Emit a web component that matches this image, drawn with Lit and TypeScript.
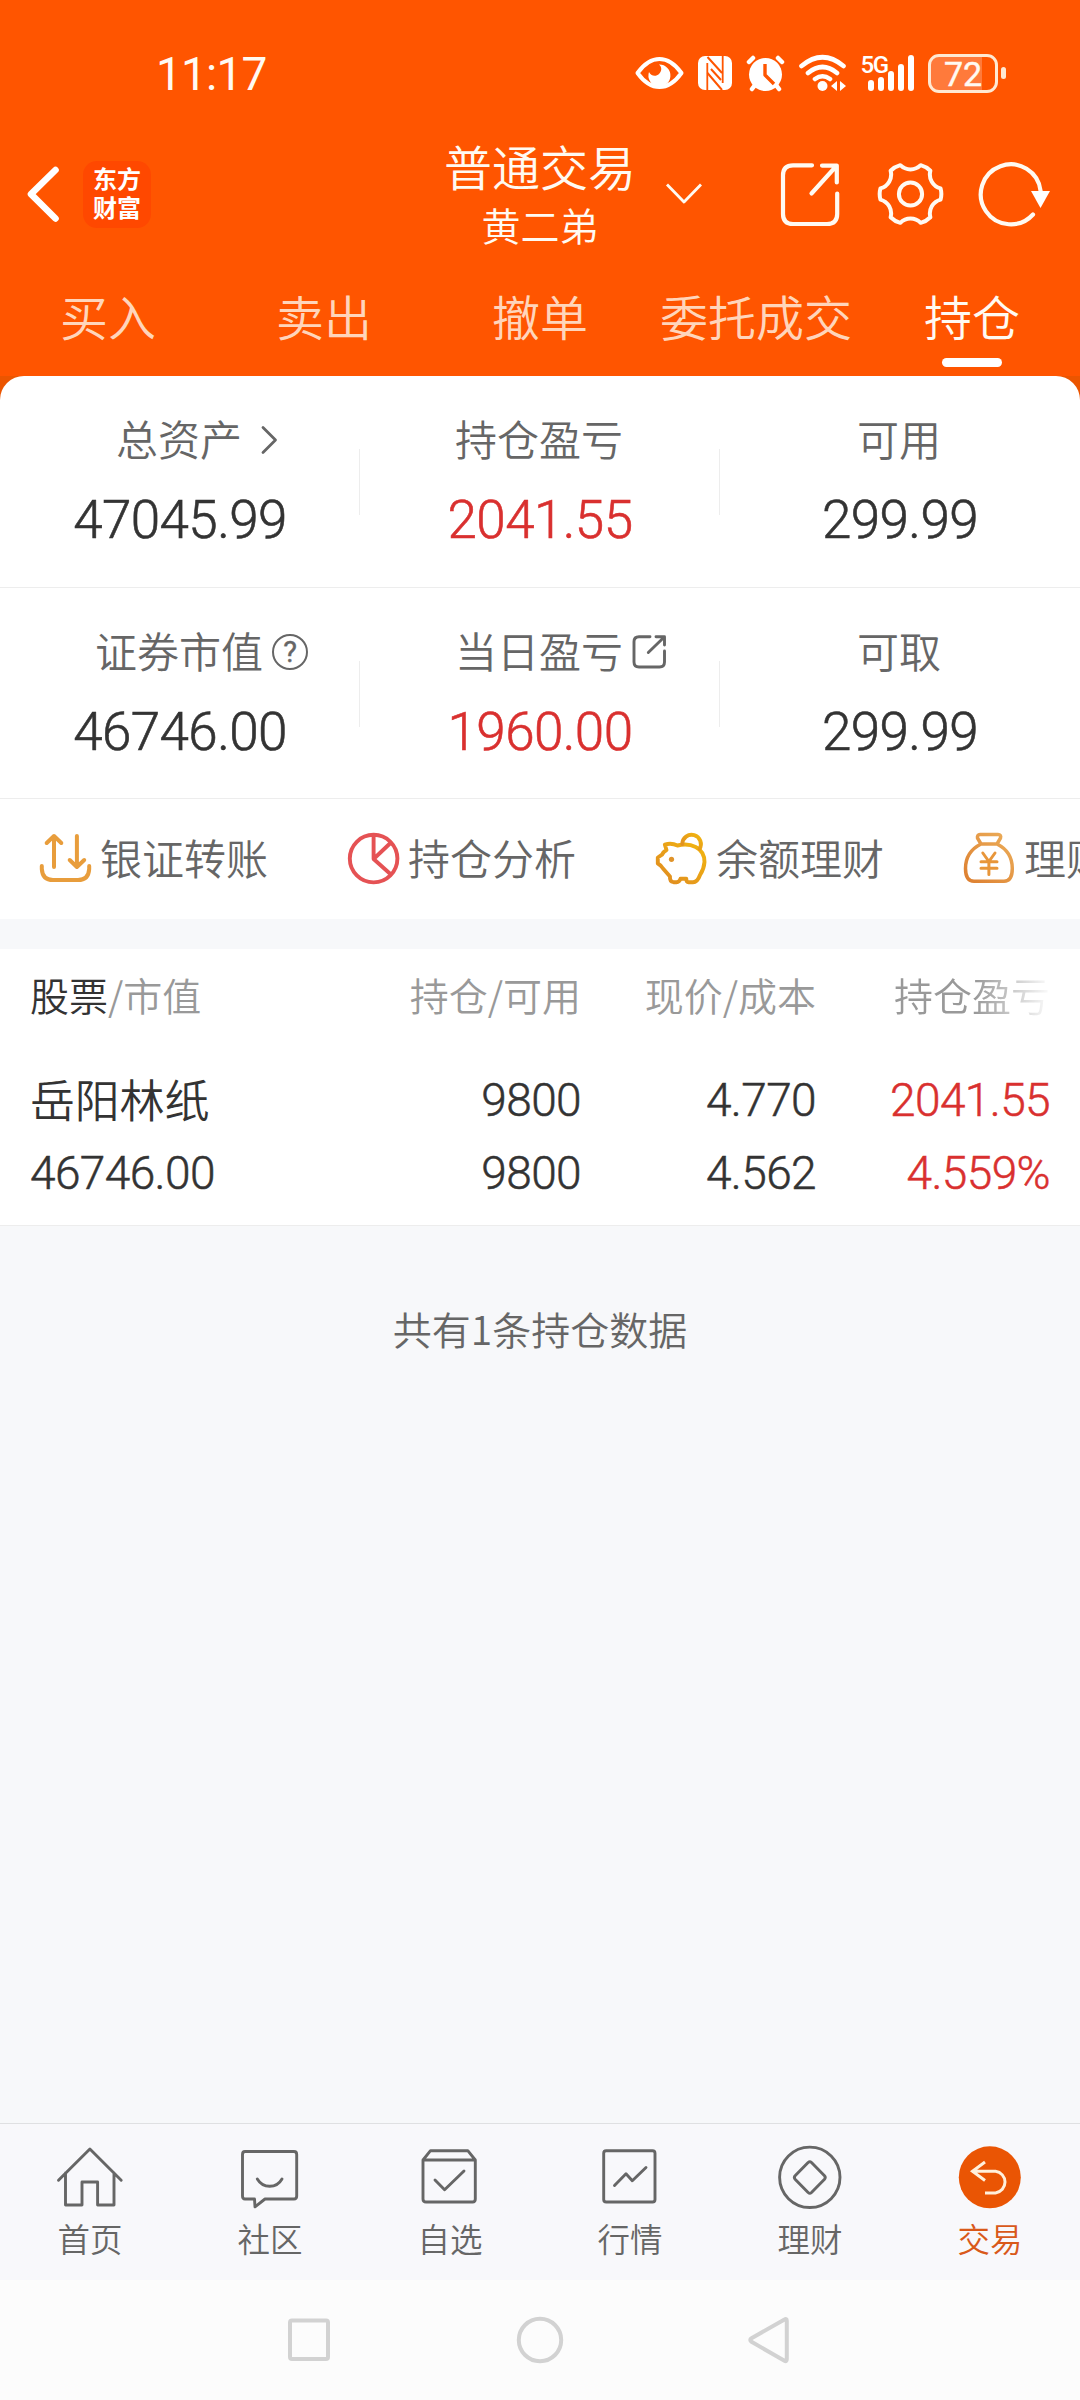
import { LitElement, html, svg, css, nothing } from "lit";
import type { TemplateResult, SVGTemplateResult } from "lit";
import { customElement } from "lit/decorators.js";
import { classMap } from "lit/directives/class-map.js";

interface Metric {
  label: string;
  value: string;
  up?: boolean;
  icon?: TemplateResult;
}

interface IconItem {
  label: string;
  icon: TemplateResult;
  active?: boolean;
}

/* Every icon keeps its drawing in one shared page space; the view box picks its region. */
const icon = (
  x: number,
  y: number,
  w: number,
  h: number,
  color: string,
  stroke: number,
  body: SVGTemplateResult,
) => html`<svg
  width=${w}
  height=${h}
  viewBox="${x} ${y} ${w} ${h}"
  fill="none"
  stroke=${color}
  stroke-width=${stroke}
  stroke-linecap="round"
  stroke-linejoin="round"
>${body}</svg>`;

const gearPath = (cx: number, cy: number): string => {
  const at = (deg: number, r: number) => {
    const a = (deg * Math.PI) / 180;
    return `${(cx + r * Math.cos(a)).toFixed(2)} ${(cy + r * Math.sin(a)).toFixed(2)}`;
  };
  let d = `M${at(-10.5, 30.6)}`;
  for (let k = 0; k < 6; k++) {
    const t = k * 60;
    d += `Q${at(t, 31.6)} ${at(t + 10.5, 30.6)}`;
    d += `C${at(t + 19, 23.6)} ${at(t + 41, 23.6)} ${at(t + 49.5, 30.6)}`;
  }
  return d + "Z";
};

const GREY = "#666666";
const WHITE = "#fffaf2";

const eye = icon(635, 55, 49, 36, "#fff", 4, svg`
  <path d="M637.5 73C644 64 652 59 659.500 59S675 64 681.500 73C675 82 667 87 659.500 87S644 82 637.500 73Z"/>
  <path stroke="none" fill="#fff" d="M659 64.500A11 11 0 1 1 649 72C650.500 76 656 77 659 74C662 71 662 67 659 64.500Z"/>`);
const nfc = icon(698, 56, 34, 34, "#fff", 0, svg`
  <rect x="698" y="56" width="34" height="34" rx="7" fill="#fff"/>
  <path d="M707.300 63V90M722.700 56V83" stroke="#ff5500" stroke-width="1.800" stroke-linecap="butt"/>
  <path d="M707.500 57L722 73M711 69L721 80M707.500 73L722 90" stroke="#ff5500" stroke-width="2" stroke-linecap="butt"/>`);
const alarm = icon(746, 54, 39, 38, "#fff", 4.5, svg`
  <circle cx="765.500" cy="74.500" r="16.500" fill="#fff" stroke="none"/>
  <path d="M749 62L753 58M782 62L778 58M755 85L752 89M776 85L779 89"/>
  <path stroke="#ff5500" stroke-width="3.400" stroke-linecap="butt" d="M765 64V75L774 84"/>`);
const wifi = icon(799, 54, 48, 38, "#fff", 4.6, svg`
  <path d="M801.500 66Q822.500 48.500 843.500 66M808 73Q822.500 61 837 73M815 79Q822.500 73.500 830 79"/>
  <circle cx="822.500" cy="86" r="5" fill="#fff" stroke="none"/>
  <path stroke="none" fill="#fff" d="M837 81V91L831 86zM840 81V91L846 86z"/>`);
const signal = icon(860, 44, 54, 58, "#fff", 6, svg`
  <path d="M871 83V88M881 80V88M891 74V88M901 67V88M911 58V88"/>
  <text class="net" x="860.500" y="73" stroke="none" fill="#fff">5G</text>`);

const backIcon = icon(24, 162, 38, 64, "#fff", 6.6, svg`<path d="M55.500 170L31 194.200L55.500 218.500"/>`);
const downIcon = icon(664, 180, 40, 26, WHITE, 2.8, svg`<path stroke-linecap="butt" d="M667 183.500L684 201L701 183.500"/>`);
const shareIcon = icon(780, 161, 62, 67, WHITE, 4.2, svg`
  <path d="M812 165.300H793Q783 165.300 783 175.300V214Q783 224 793 224H827Q837.200 224 837.200 214V193.500"/>
  <path d="M822 165.600H836.800V182.500M811.500 193.500L835 167.500"/>`);
const gearIcon = icon(876, 160, 68, 68, WHITE, 4, svg`
  <path d=${gearPath(910.5, 194)}/><circle cx="910.500" cy="194" r="11.600"/>`);
const refreshIcon = icon(978, 160, 74, 68, WHITE, 4.2, svg`
  <path d="M1033 214.500A30 30 0 1 1 1040.600 191"/>
  <path d="M1031 191H1050L1040.500 208Z" fill="#fff" stroke="none"/>`);

const chevronRight = icon(260, 423, 20, 34, GREY, 2.8, svg`<path d="M263 427.500L275.500 440L263 452.500"/>`);
const openSmall = icon(633, 633, 36, 36, GREY, 2.9, svg`
  <path d="M651 635.700H640Q635 635.700 635 640.700V661Q635 666 640 666H660.500Q665.500 666 665.500 661V650"/>
  <path d="M657 635.700H665.500V644M649.300 651.500L664.500 636.700"/>`);

const transferIcon = icon(38, 831, 54, 54, "#e89d3c", 4, svg`
  <path d="M54 867V836M46.700 843L54 836L61.300 843M76.900 836V866M69.700 860L76.900 867L84.200 860M41.800 866V869Q42.500 880 53 880H78Q88.500 880 89.200 869V866"/>`);
const pieIcon = icon(346, 831, 54, 54, "#e55254", 3.9, svg`
  <circle cx="373.600" cy="858.600" r="23.800"/>
  <path stroke-linecap="butt" d="M373.600 835V859L391 842.500M373.600 859L391.500 875"/>`);
const pigIcon = icon(654, 831, 54, 54, "url(#pig)", 3.9, svg`
  <defs><linearGradient id="pig" x1="0" y1="1" x2="1" y2="0"><stop offset="0" stop-color="#df8a22"/><stop offset="1" stop-color="#f2b60f"/></linearGradient></defs>
  <path d="M664.800 844.500Q671.500 842.500 677.500 845.500C690 842.500 704.500 847 704.500 862Q704 869 700 875Q697.500 882.200 693 882.200H688.500Q686.300 882.200 686.300 878.800H680.500Q679.500 882.200 676.500 882.200H673.500Q669.500 881.500 670 876.500L663 868.500Q661.500 865.500 657.800 863.500V857.500L662 854.700Q663 852 666.500 850Z"/>
  <path d="M682.300 844A9.300 9.300 0 1 1 699.500 849"/>
  <circle cx="671.500" cy="859.300" r="2.600" fill="#e0932a" stroke="none"/>`);
const bagIcon = icon(962, 831, 54, 54, "url(#bag)", 3.5, svg`
  <defs><linearGradient id="bag" x1="0" y1="1" x2="1" y2="0"><stop offset="0" stop-color="#dd7f30"/><stop offset="1" stop-color="#ecae5a"/></linearGradient></defs>
  <path d="M981 844L977.500 838Q977 834.600 980 834.600H998Q1001.500 834.600 1000.500 838L997 844ZM981 844C971 849 965.500 858 965.500 868.500Q965.500 881.200 974 881.200H1004Q1012.300 881.200 1012.300 868.500C1012.300 858 1007 849 997 844"/>
  <path stroke="#e8963a" stroke-width="3" d="M982.800 853L988.900 861.500L995 853M988.900 861.500V874.500M981 861.700H997M981 868.300H997"/>`);

const homeIcon = icon(56, 2143, 68, 68, GREY, 2.9, svg`
  <path d="M58.500 2180.200L89.900 2149L121.200 2180.200M65.500 2173V2205H82V2182H97.600V2205H114V2173"/>`);
const chatIcon = icon(236, 2143, 68, 68, GREY, 2.9, svg`
  <path d="M245 2151.500H294Q296.700 2151.500 296.700 2154.500V2196Q296.700 2199 294 2199H265L255 2206.800L254.500 2199H245Q242.500 2199 242.500 2196V2154.500Q242.500 2151.500 245 2151.500Z"/>
  <path d="M257.300 2179C263 2188.700 276.500 2188.700 282 2179"/>`);
const pickIcon = icon(416, 2143, 68, 68, GREY, 2.9, svg`
  <path d="M423 2160H475.300V2199Q475.300 2202 472.500 2202H426Q423 2202 423 2199ZM423 2160L430.500 2150.700H467.800L475.300 2160M435 2180L444.600 2189.700L464 2171"/>`);
const marketIcon = icon(596, 2143, 68, 68, GREY, 2.9, svg`
  <rect x="603.700" y="2150.700" width="51.300" height="51.300" rx="2.500"/>
  <path d="M614.500 2185.500L626 2173.700L632.300 2180.700L646 2167.500"/>`);
const wealthIcon = icon(776, 2143, 68, 68, GREY, 2.9, svg`
  <circle cx="809.800" cy="2177.300" r="30.200"/>
  <path d="M811.500 2162.500L824.500 2175.800Q826 2177.500 824.500 2179.200L811.500 2192.500Q809.800 2194 808.100 2192.500L795.100 2179.200Q793.600 2177.500 795.100 2175.800L808.100 2162.500Q809.800 2161 811.500 2162.500Z"/>`);
const tradeIcon = icon(956, 2143, 68, 68, "#fff0dc", 3, svg`
  <circle cx="989.800" cy="2177.300" r="31" fill="#ea5504" stroke="none"/>
  <path stroke-linecap="butt" stroke-linejoin="miter" d="M985 2162L972.500 2171.200L985 2180.500M972.500 2171.200H995.500A11 11 0 0 1 995.500 2193H985"/>`);

const sysSquare = icon(282, 2312, 54, 56, "#d2d2d2", 4, svg`<rect x="290" y="2320.500" width="38" height="38.500" rx="2"/>`);
const sysCircle = icon(512, 2312, 54, 56, "#d2d2d2", 4, svg`<circle cx="540" cy="2340" r="21.200"/>`);
const sysBack = icon(742, 2312, 54, 56, "#d2d2d2", 4, svg`<path d="M784.500 2319.500Q786.800 2318 786.800 2321V2359Q786.800 2362 784.500 2360.800L751.500 2341.800Q749 2340 751.500 2338.200Z"/>`);

@customElement("app-root")
export class AppRoot extends LitElement {
  static styles = css`
    :host {
      display: flex;
      flex-direction: column;
      width: 1080px;
      height: 2400px;
      overflow: hidden;
      background: #f7f8fa;
      color: #333;
      font-family: "Noto Sans CJK SC", sans-serif;
      font-weight: 350;
      white-space: nowrap;
    }
    svg { display: block; flex: none; }
    .num { font-family: Roboto, "Noto Sans CJK SC", sans-serif; font-weight: 350; }
    .head { background: #ff5500; color: #fffaf2; flex: none; }
    .status {
      height: 146px;
      box-sizing: border-box;
      padding: 0 74px 0 156px;
      display: flex;
      align-items: center;
      gap: 14px;
    }
    .time { font-size: 46px; line-height: 50px; letter-spacing: -0.8px; margin-right: auto; padding-top: 1px; font-weight: 400; }
    .signal svg { margin-left: -1px; }
    .net { font: 500 24px Roboto, sans-serif; letter-spacing: -1.5px; }
    .battery { display: flex; align-items: center; gap: 3px; }
    .cell {
      width: 70px;
      height: 39px;
      box-sizing: border-box;
      border: 3px solid #ffe9d2;
      border-radius: 11px;
      background: linear-gradient(90deg, #ff7a3b 51px, transparent 51px);
      font-size: 34px;
      line-height: 35px;
      font-weight: 400;
      -webkit-text-stroke: 0.4px currentColor;
      text-align: center;
    }
    .nub { width: 5px; height: 12px; border-radius: 2.5px; background: #ffe9d2; }
    .bar { height: 96px; display: grid; grid-template: 96px / 1fr auto 1fr; align-items: center; }
    .left { display: flex; align-items: center; padding-left: 24px; gap: 21px; }
    .logo {
      width: 68px;
      height: 67px;
      border-radius: 14px;
      background: #ff4800;
      color: #fff;
      font-size: 24px;
      font-weight: 700;
      line-height: 29px;
      text-align: center;
      padding-top: 2px;
      box-sizing: border-box;
    }
    .title { text-align: center; }
    .name { font-size: 48px; line-height: 60px; }
    .sub { font-size: 39px; line-height: 58px; }
    .right { display: flex; align-items: center; padding: 0 28px; }
    .tools { display: flex; align-items: center; gap: 34px; margin-left: auto; }
    .tabs { height: 134px; display: grid; grid-template-columns: repeat(5, 1fr); }
    .tab {
      display: flex;
      flex-direction: column;
      align-items: center;
      padding-top: 43px;
      gap: 13px;
      font-size: 48px;
      line-height: 60px;
      color: #ffd5bb;
    }
    .tab.on { color: #fffaf2; }
    .mark { width: 60px; height: 9px; border-radius: 4.500px; background: #fff; }
    .backing { background: #eb5500; flex: none; }
    .panel { background: #fff; border-radius: 24px 24px 0 0; }
    .metrics { display: grid; grid-template-columns: repeat(3, 1fr); height: 211px; border-bottom: 1px solid #ededed; }
    .metrics + .metrics { height: 210px; }
    .metric { display: flex; flex-direction: column; background: linear-gradient(#ededed, #ededed) right 73px / 1px 66px no-repeat; }
    .metric.last { background: none; }
    .label {
      display: grid;
      grid-template-columns: 1fr auto 1fr;
      align-items: center;
      height: 60px;
      padding-top: 34px;
      font-size: 42px;
      line-height: 60px;
      color: #666;
    }
    .label .hang { grid-column: 3; padding-left: 8px; }
    .label .text { grid-column: 2; margin: -4px 1px 0 -1px; }
    .hang.wide { padding-left: 17px; }
    .help {
      width: 36px;
      height: 36px;
      box-sizing: border-box;
      border: 2.700px solid #666;
      border-radius: 50%;
      font: 400 29px/32px Roboto, sans-serif;
      -webkit-text-stroke: 0.4px currentColor;
      text-align: center;
    }
    .value {
      font-size: 53px;
      line-height: 60px;
      letter-spacing: -0.6px;
      text-align: center;
      padding-top: 20px;
      -webkit-text-stroke: 0.6px currentColor;
    }
    .up { color: #d9302f; }
    .quick { display: flex; gap: 78px; align-items: center; height: 120px; padding-left: 38px; overflow: hidden; }
    .item { display: flex; flex: none; align-items: center; gap: 8px; font-size: 42px; line-height: 60px; color: #666; }
    .item svg { margin-top: -2px; }
    .item span { margin-top: -5px; }
    .table { margin-top: 30px; background: #fff; height: 276px; border-bottom: 1px solid #ededed; flex: none; }
    .row { display: grid; grid-template-columns: 341px 210px 235px 234px; padding: 0 30px; text-align: right; }
    .row > :first-child { text-align: left; }
    .th { font-size: 39px; line-height: 60px; color: #999; padding-top: 15px; height: 98px; box-sizing: border-box; }
    .dark { color: #333; }
    .fade { -webkit-mask-image: linear-gradient(90deg, #000 68%, transparent 101%); mask-image: linear-gradient(90deg, #000 68%, transparent 101%); }
    .td {
      font-size: 46px;
      line-height: 73px;
      letter-spacing: -0.6px;
      height: 73px;
      padding-top: 17px;
      box-sizing: content-box;
      -webkit-text-stroke: 0.5px currentColor;
    }
    .td + .td { padding-top: 0; }
    .stock {
      font-size: 45px;
      letter-spacing: -0.2px;
      font-family: "Noto Sans CJK SC", sans-serif;
      line-height: 69px;
      -webkit-text-stroke: 0;
    }
    .count { padding-top: 72px; text-align: center; font-size: 39px; line-height: 60px; color: #666; flex: 1; }
    .nav {
      height: 157px;
      box-sizing: border-box;
      border-top: 1px solid #dfe0e2;
      background: #f8f8fb;
      display: grid;
      grid-template-columns: repeat(6, 1fr);
      flex: none;
    }
    .link { display: flex; flex-direction: column; align-items: center; padding-top: 19px; gap: 2px; font-size: 32.500px; line-height: 50px; color: #666; }
    .link.on { color: #d9591a; }
    .sys { height: 120px; background: #fcfcfc; display: flex; justify-content: center; align-items: center; gap: 176px; padding-right: 2px; flex: none; }
  `;

  private tabs = ["买入", "卖出", "撤单", "委托成交", "持仓"];

  private metrics: Metric[][] = [
    [
      { label: "总资产", value: "47045.99", icon: html`<span class="hang wide">${chevronRight}</span>` },
      { label: "持仓盈亏", value: "2041.55", up: true },
      { label: "可用", value: "299.99" },
    ],
    [
      { label: "证券市值", value: "46746.00", icon: html`<span class="hang"><div class="help">?</div></span>` },
      { label: "当日盈亏", value: "1960.00", up: true, icon: html`<span class="hang">${openSmall}</span>` },
      { label: "可取", value: "299.99" },
    ],
  ];

  private quick: IconItem[] = [
    { label: "银证转账", icon: transferIcon },
    { label: "持仓分析", icon: pieIcon },
    { label: "余额理财", icon: pigIcon },
    { label: "理财", icon: bagIcon },
  ];

  private links: IconItem[] = [
    { label: "首页", icon: homeIcon },
    { label: "社区", icon: chatIcon },
    { label: "自选", icon: pickIcon },
    { label: "行情", icon: marketIcon },
    { label: "理财", icon: wealthIcon },
    { label: "交易", icon: tradeIcon, active: true },
  ];

  private renderHead() {
    return html`
      <header class="head">
        <div class="status">
          <div class="time num">11:17</div>
          ${eye}${nfc}${alarm}${wifi}<div class="signal">${signal}</div>
          <div class="battery"><div class="cell num">72</div><div class="nub"></div></div>
        </div>
        <div class="bar">
          <div class="left">${backIcon}<div class="logo">东方<br />财富</div></div>
          <div class="title"><div class="name">普通交易</div><div class="sub">黄二弟</div></div>
          <div class="right">${downIcon}<div class="tools">${shareIcon}${gearIcon}${refreshIcon}</div></div>
        </div>
        <nav class="tabs">
          ${this.tabs.map((t) => {
            const on = t === "持仓";
            return html`<div class=${classMap({ tab: true, on })}>${t}${on ? html`<div class="mark"></div>` : nothing}</div>`;
          })}
        </nav>
      </header>
    `;
  }

  private renderMetric = (m: Metric, i: number) => html`
    <div class=${classMap({ metric: true, last: i === 2 })}>
      <div class="label"><span class="text">${m.label}</span>${m.icon ?? nothing}</div>
      <div class=${classMap({ value: true, num: true, up: !!m.up })}>${m.value}</div>
    </div>
  `;

  render() {
    return html`
      ${this.renderHead()}
      <div class="backing">
        <section class="panel">
          ${this.metrics.map((row) => html`<div class="metrics">${row.map(this.renderMetric)}</div>`)}
          <div class="quick">${this.quick.map((q) => html`<div class="item">${q.icon}<span>${q.label}</span></div>`)}</div>
        </section>
      </div>
      <section class="table">
        <div class="row th">
          <div><span class="dark">股票</span>/市值</div>
          <div>持仓/可用</div>
          <div>现价/成本</div>
          <div class="fade">持仓盈亏</div>
        </div>
        <div class="row td num dark"><div class="stock">岳阳林纸</div><div>9800</div><div>4.770</div><div class="up">2041.55</div></div>
        <div class="row td num dark"><div>46746.00</div><div>9800</div><div>4.562</div><div class="up">4.559%</div></div>
      </section>
      <div class="count">共有1条持仓数据</div>
      <nav class="nav">
        ${this.links.map((l) => html`<div class=${classMap({ link: true, on: !!l.active })}>${l.icon}<span>${l.label}</span></div>`)}
      </nav>
      <div class="sys">${sysSquare}${sysCircle}${sysBack}</div>
    `;
  }
}
